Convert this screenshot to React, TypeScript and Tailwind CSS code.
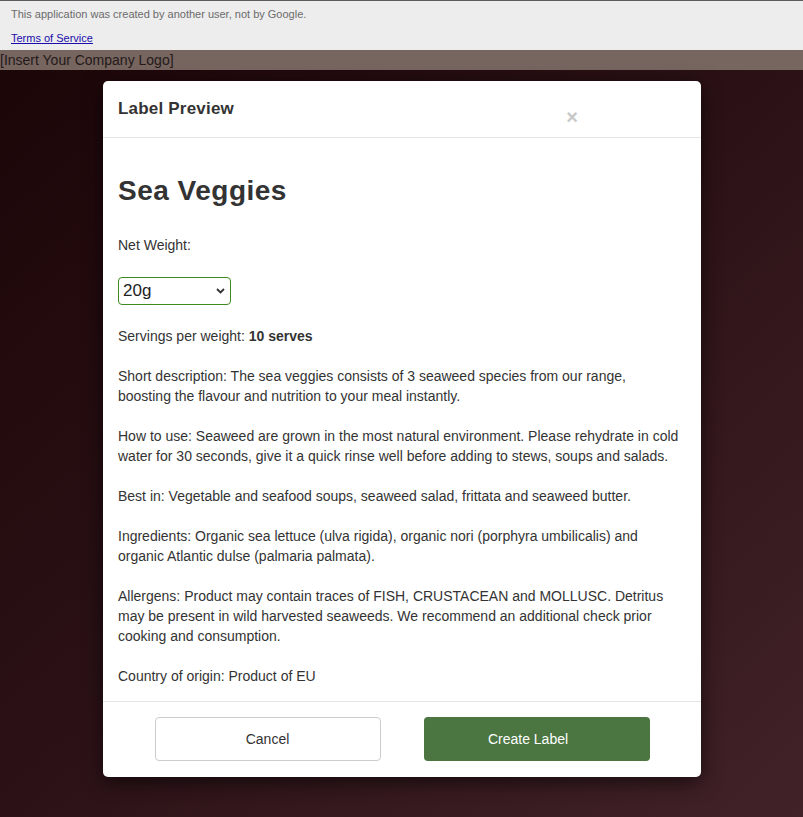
import { useState } from "react";

const paragraphs = [
  "Short description: The sea veggies consists of 3 seaweed species from our range, boosting the flavour and nutrition to your meal instantly.",
  "How to use: Seaweed are grown in the most natural environment. Please rehydrate in cold water for 30 seconds, give it a quick rinse well before adding to stews, soups and salads.",
  "Best in: Vegetable and seafood soups, seaweed salad, frittata and seaweed butter.",
  "Ingredients: Organic sea lettuce (ulva rigida), organic nori (porphyra umbilicalis) and organic Atlantic dulse (palmaria palmata).",
  "Allergens: Product may contain traces of FISH, CRUSTACEAN and MOLLUSC. Detritus may be present in wild harvested seaweeds. We recommend an additional check prior cooking and consumption.",
  "Country of origin: Product of EU",
];

export default function App() {
  const [weight, setWeight] = useState("20g");

  return (
    <div className="min-h-[817px] flex flex-col font-['Liberation_Sans',Arial,sans-serif]">
      {/* Google notice bar */}
      <div className="h-[50px] bg-[#ededed] border-t border-[#5c5c5c] px-[11px] text-[11px] leading-[13px]">
        <p className="text-[#6b6b6b] pt-[7px]">
          This application was created by another user, not by Google.
        </p>
        <a href="#" className="block mt-[11px] text-[#1a0dab] underline">
          Terms of Service
        </a>
      </div>

      <div className="h-[20px] bg-[#776560] text-[14px] leading-[20px] text-[#231a19]">
        [Insert Your Company Logo]
      </div>

      {/* backdrop */}
      <div className="flex-1 bg-gradient-to-br from-[#1c0608] via-[#2c1216] to-[#412228] pt-[11px] pb-[40px]">
        <div className="ml-[103px] w-[598px] bg-white rounded-[5px] shadow-[0_5px_20px_rgba(0,0,0,0.6)] text-[#333]">
          <div className="h-[57px] border-b border-[#e5e5e5] flex items-start px-[15px]">
            <h4 className="text-[17px] leading-[20px] font-semibold mt-[18px] tracking-[0.2px] text-[#333]">
              Label Preview
            </h4>
            <button className="ml-auto mr-[108px] mt-[26px] text-[#c8c8c8] text-[20px] leading-[20px] font-bold">
              ×
            </button>
          </div>

          <div className="pl-[15px] pr-[20px] pb-[15px] text-[14px] leading-[20px]">
            <h2 className="text-[28px] leading-[34px] font-bold mt-[36px] tracking-[0.5px] text-[#333]">
              Sea Veggies
            </h2>
            <p className="mt-[27px]">Net Weight:</p>
            <div className="relative mt-[22px] w-[113px]">
              <select
                value={weight}
                onChange={(e) => setWeight(e.target.value)}
                className="appearance-none w-[113px] h-[28px] border border-[#3d8a22] rounded-[4px] bg-white pl-[4px] text-[17px] text-[#222] outline-none"
              >
                <option>20g</option>
                <option>50g</option>
                <option>100g</option>
              </select>
              <svg
                className="absolute right-[6px] top-[11px] pointer-events-none"
                width="9"
                height="6"
                viewBox="0 0 9 6"
              >
                <path d="M1 1l3.5 3.5L8 1" fill="none" stroke="#333" strokeWidth="1.8" />
              </svg>
            </div>
            <p className="mt-[21px]">
              Servings per weight: <b>10 serves</b>
            </p>
            {paragraphs.map((p) => (
              <p key={p} className="mt-[20px]">
                {p}
              </p>
            ))}
          </div>

          <div className="border-t border-[#e5e5e5] flex justify-center gap-[43px] pt-[15px] pb-[16px]">
            <button className="w-[226px] h-[44px] border border-[#ccc] rounded-[4px] bg-white text-[14px] text-[#333]">
              Cancel
            </button>
            <button className="w-[226px] h-[44px] rounded-[4px] bg-[#4b7642] pr-[17px] text-[14px] text-white">
              Create Label
            </button>
          </div>
        </div>
      </div>
    </div>
  );
}
